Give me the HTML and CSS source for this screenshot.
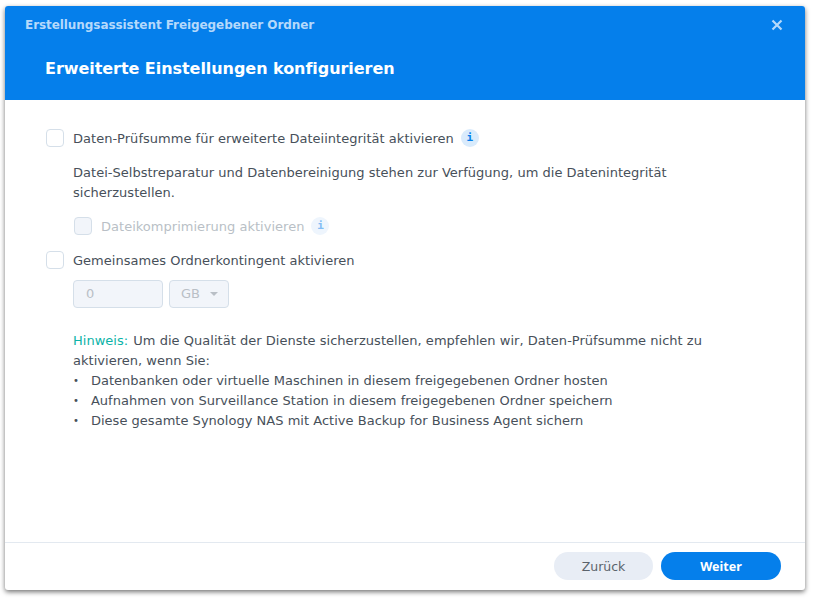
FILE: index.html
```html
<!DOCTYPE html>
<html lang="de">

<head>
	<meta charset="UTF-8">
	<title>Erstellungsassistent Freigegebener Ordner</title>
	<link rel="stylesheet" href="styles.css">
</head>

<body>
	<div class="dialog">
		<header class="dialog-header">
			<div class="title-row">
				<span class="window-title">Erstellungsassistent Freigegebener Ordner</span>
				<svg class="close-icon" width="12" height="12" viewBox="0 0 12 12">
					<path d="M1.5 1.5 L10.5 10.5 M10.5 1.5 L1.5 10.5" stroke="#b5d9fb" stroke-width="2.2" fill="none" />
				</svg>
			</div>
			<h1 class="step-title">Erweiterte Einstellungen konfigurieren</h1>
		</header>

		<main class="dialog-body">
			<div class="check-row">
				<span class="checkbox"></span>
				<span class="check-label">Daten-Prüfsumme für erweiterte Dateiintegrität aktivieren</span>
				<span class="info-badge">i</span>
			</div>
			<p class="description">Datei-Selbstreparatur und Datenbereinigung stehen zur Verfügung, um die Datenintegrität sicherzustellen.</p>
			<div class="check-row indented disabled">
				<span class="checkbox"></span>
				<span class="check-label">Dateikomprimierung aktivieren</span>
				<span class="info-badge">i</span>
			</div>
			<div class="check-row quota-row">
				<span class="checkbox"></span>
				<span class="check-label">Gemeinsames Ordnerkontingent aktivieren</span>
			</div>
			<div class="quota-fields">
				<div class="field number-field">0</div>
				<div class="field unit-field">GB<span class="caret"></span></div>
			</div>
			<div class="note">
				<p><span class="note-label">Hinweis:</span> Um die Qualität der Dienste sicherzustellen, empfehlen wir, Daten-Prüfsumme nicht zu aktivieren, wenn Sie:</p>
				<ul>
					<li>Datenbanken oder virtuelle Maschinen in diesem freigegebenen Ordner hosten</li>
					<li>Aufnahmen von Surveillance Station in diesem freigegebenen Ordner speichern</li>
					<li>Diese gesamte Synology NAS mit Active Backup for Business Agent sichern</li>
				</ul>
			</div>
		</main>

		<footer class="dialog-footer">
			<button class="btn btn-back">Zurück</button>
			<button class="btn btn-next">Weiter</button>
		</footer>
	</div>
</body>

</html>
```

FILE: styles.css
```css
* {
	box-sizing: border-box;
}

html,
body {
	height: 100%;
}

body {
	margin: 0;
	padding: 6px 9px 9px 5px;
	background: #fff;
	font-family: "DejaVu Sans", sans-serif;
	font-size: 13px;
	line-height: 20px;
	letter-spacing: 0.02px;
	color: #47505a;
	overflow: hidden;
}

.dialog {
	display: flex;
	flex-direction: column;
	width: 800px;
	height: 584px;
	background: #fff;
	border-radius: 3px;
	box-shadow: 0 2px 5px rgba(0, 0, 0, 0.55);
	overflow: hidden;
}

.dialog-header {
	height: 94px;
	padding: 9px 22px 0 20px;
	background: #057feb;
}

.title-row {
	display: flex;
	justify-content: space-between;
	align-items: center;
	height: 20px;
}

.window-title {
	font-size: 12px;
	font-weight: 700;
	letter-spacing: -0.07px;
	color: #b5d9fb;
}

.step-title {
	margin: 22px 0 0 20px;
	font-size: 16px;
	line-height: 24px;
	font-weight: 700;
	letter-spacing: -0.05px;
	color: #fff;
}

.dialog-body {
	flex: 1;
	padding: 28px 41px 0;
}

.check-row {
	display: flex;
	align-items: center;
	gap: 9px;
	height: 20px;
}

.check-label {
	padding-top: 2px;
}

.checkbox {
	width: 18px;
	height: 18px;
	border: 1px solid #d5dfe9;
	border-radius: 4px;
	background: #fff;
}

.info-badge {
	display: flex;
	justify-content: center;
	align-items: center;
	width: 18px;
	height: 18px;
	margin-left: -2px;
	border-radius: 50%;
	background: #d9ebfc;
	color: #057feb;
	font-family: "DejaVu Sans Mono", monospace;
	font-size: 11px;
	font-weight: 700;
}

.description {
	margin: 15px 0 0 27px;
}

.indented {
	margin: 13px 0 0 28px;
}

.disabled {
	color: #b9bfc6;
}

.disabled .checkbox {
	background: #f2f5fa;
}

.disabled .info-badge {
	background: #eef5fd;
	color: #83bdf4;
}

.quota-row {
	margin-top: 14px;
}

.quota-fields {
	display: flex;
	gap: 6px;
	margin: 10px 0 0 27px;
}

.field {
	height: 28px;
	border: 1px solid #d5dfe9;
	border-radius: 4px;
	background: #f2f5fa;
	color: #b9bfc6;
	line-height: 26px;
}

.number-field {
	width: 90px;
	padding-left: 12px;
}

.unit-field {
	display: flex;
	align-items: center;
	gap: 10px;
	width: 60px;
	padding-left: 11px;
}

.caret {
	width: 0;
	height: 0;
	border-left: 4px solid transparent;
	border-right: 4px solid transparent;
	border-top: 4px solid #b9bfc6;
}

.note {
	margin: 23px 0 0 27px;
}

.note p {
	margin: 0;
}

.note-label {
	margin-right: 1px;
	color: #0cb3a8;
}

.note ul {
	margin: 0;
	padding: 0;
	list-style: none;
}

.note li {
	display: flex;
	gap: 12px;
}

.note li::before {
	content: "•";
	font-size: 10px;
}

.dialog-footer {
	display: flex;
	justify-content: flex-end;
	gap: 8px;
	height: 48px;
	padding: 9px 24px 0 0;
	border-top: 1px solid #e3e9f0;
}

.btn {
	height: 28px;
	border: 0;
	border-radius: 14px;
	font-family: inherit;
	font-size: 12.5px;
}

.btn-back {
	width: 99px;
	background: #e8edf5;
	color: #5b636c;
}

.btn-next {
	width: 120px;
	background: #057feb;
	color: #fff;
	font-family: "Noto Sans", sans-serif;
	font-weight: 700;
}
```
